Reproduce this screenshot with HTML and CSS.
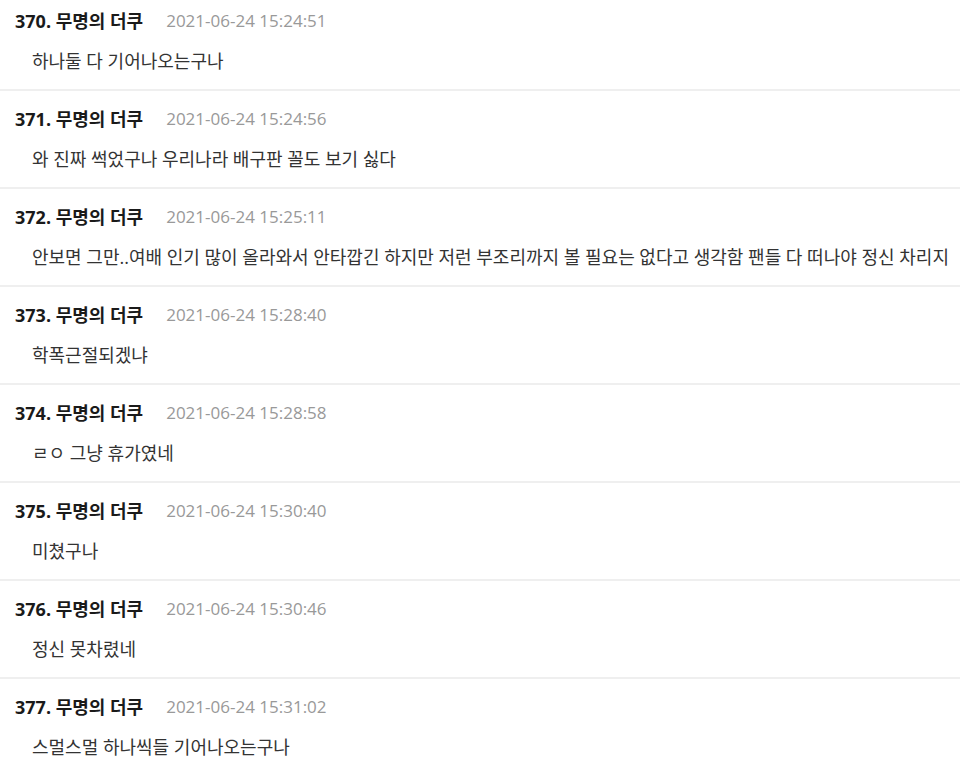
FILE: index.html
```html
<!DOCTYPE html>
<html lang="ko">
<head>
  <meta charset="UTF-8" />
  <meta name="viewport" content="width=device-width, initial-scale=1.0" />
  <title>댓글</title>
  <link rel="stylesheet" href="styles.css">
</head>
<body>

  <!-- Comment list -->
  <div class="comment-list">
    <div class="comment">
      <div class="comment-head"><span class="comment-no">370. 무명의 더쿠</span><span class="comment-date">2021-06-24 15:24:51</span></div>
      <div class="comment-body">하나둘 다 기어나오는구나</div>
    </div>
    <div class="comment">
      <div class="comment-head"><span class="comment-no">371. 무명의 더쿠</span><span class="comment-date">2021-06-24 15:24:56</span></div>
      <div class="comment-body">와 진짜 썩었구나 우리나라 배구판 꼴도 보기 싫다</div>
    </div>
    <div class="comment">
      <div class="comment-head"><span class="comment-no">372. 무명의 더쿠</span><span class="comment-date">2021-06-24 15:25:11</span></div>
      <div class="comment-body">안보면 그만..여배 인기 많이 올라와서 안타깝긴 하지만 저런 부조리까지 볼 필요는 없다고 생각함 팬들 다 떠나야 정신 차리지</div>
    </div>
    <div class="comment">
      <div class="comment-head"><span class="comment-no">373. 무명의 더쿠</span><span class="comment-date">2021-06-24 15:28:40</span></div>
      <div class="comment-body">학폭근절되겠냐</div>
    </div>
    <div class="comment">
      <div class="comment-head"><span class="comment-no">374. 무명의 더쿠</span><span class="comment-date">2021-06-24 15:28:58</span></div>
      <div class="comment-body">ㄹㅇ 그냥 휴가였네</div>
    </div>
    <div class="comment">
      <div class="comment-head"><span class="comment-no">375. 무명의 더쿠</span><span class="comment-date">2021-06-24 15:30:40</span></div>
      <div class="comment-body">미쳤구나</div>
    </div>
    <div class="comment">
      <div class="comment-head"><span class="comment-no">376. 무명의 더쿠</span><span class="comment-date">2021-06-24 15:30:46</span></div>
      <div class="comment-body">정신 못차렸네</div>
    </div>
    <div class="comment">
      <div class="comment-head"><span class="comment-no">377. 무명의 더쿠</span><span class="comment-date">2021-06-24 15:31:02</span></div>
      <div class="comment-body">스멀스멀 하나씩들 기어나오는구나</div>
    </div>
  </div>

</body>
</html>
```

FILE: styles.css
```css
body {
  margin: 0;
  background-color: #fff;
  font-family: "Open Sans", "Noto Sans CJK KR", sans-serif;
  color: #222;
}

.comment-list {
  margin-top: -7px;
}

.comment {
  padding: 16px 4px 16px 15px;
  border-bottom: 2px solid #efefef;
}

.comment-head {
  display: flex;
  align-items: center;
  gap: 23px;
  height: 24px;
  line-height: 24px;
}

.comment-no {
  font-size: 18px;
  font-weight: bold;
  color: #1a1a1a;
}

.comment-date {
  font-size: 17px;
  color: #999;
}

.comment-body {
  margin-top: 16px;
  padding-left: 17px;
  font-size: 18px;
  line-height: 24px;
  height: 24px;
  color: #333;
  white-space: nowrap;
}
```
